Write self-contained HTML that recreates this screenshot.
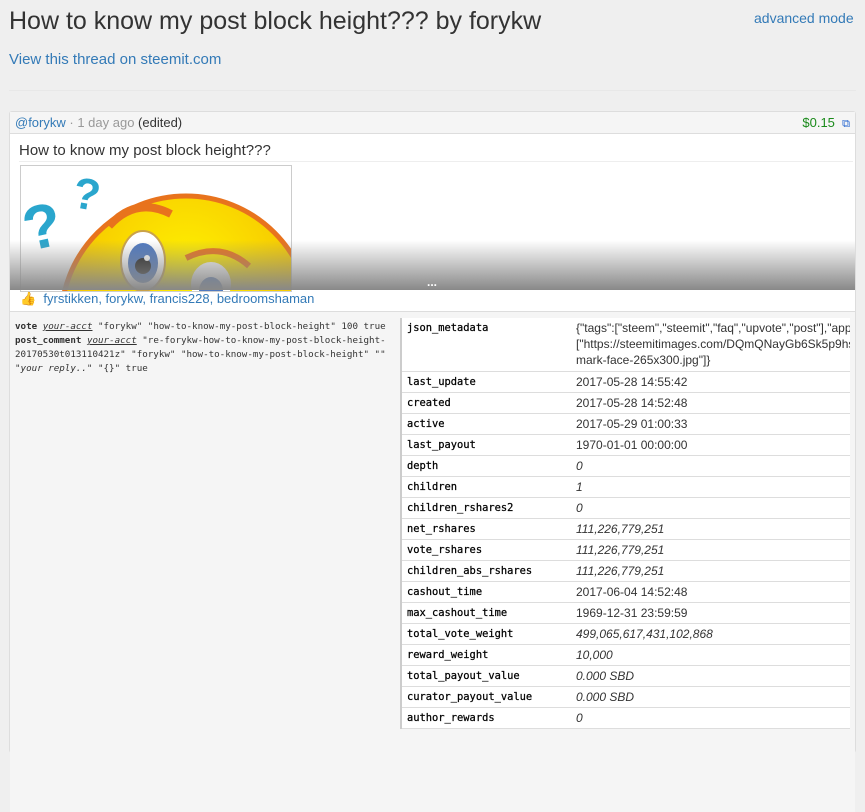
<!DOCTYPE html>
<html><head><meta charset="utf-8"><style>
body{margin:0;background:#efefef;font-family:"Liberation Sans",sans-serif;color:#333;width:865px;height:727px;overflow:hidden;position:relative}
a{color:#337ab7;text-decoration:none}
.abs{position:absolute}
h1{position:absolute;left:9px;top:7px;margin:0;font-size:25px;font-weight:normal;color:#333}
.panel{position:absolute;left:9px;top:111px;width:845px;height:640px;background:#fff;border:1px solid #ddd;border-radius:3px}
.ph{height:21px;background:#f5f5f5;border-bottom:1px solid #ddd;font-size:13px;line-height:21px;padding:0 5px}
.bot{position:absolute;left:0;top:199px;width:845px;height:500px;background:#f5f5f5;border-top:1px solid #ddd}
.cmd{position:absolute;left:5px;top:8px;width:375px;font-family:"DejaVu Sans Mono",monospace;font-size:9.2px;line-height:14px;color:#333}
.cmd u{font-style:italic}
table{position:absolute;left:390px;top:6px;width:450px;border-collapse:collapse;background:#fff;border-left:2px solid #ccc}
td{border-bottom:1px solid #ddd;font-size:12px;padding:0 4px;height:20px;vertical-align:middle;line-height:20px;color:#333}
td.k{font-family:"DejaVu Sans Mono",monospace;font-size:10.4px;width:163px;padding-left:5px;color:#000;-webkit-text-stroke:0.25px #000}
</style></head><body>
<h1>How to know my post block height??? by forykw</h1>
<a class="abs" style="left:754px;top:10px;font-size:14px">advanced mode</a>
<a class="abs" style="left:9px;top:51px;font-size:15px">View this thread on steemit.com</a>
<div class="abs" style="left:9px;top:90px;width:847px;border-top:1px solid #e8e8e8"></div>
<div class="panel">
<div class="ph"><a>@forykw</a> <span style="color:#999">· 1 day ago</span> (edited)
<span style="float:right;color:#1a8a1a">$0.15 &nbsp;<span style="color:#1c5fd0;font-size:11px">⧉</span></span></div>
<div class="abs" style="left:9px;top:30px;font-size:15px;color:#333">How to know my post block height???</div>
<div class="abs" style="left:9px;top:49px;width:834px;border-top:1px solid #eee"></div>
<div class="abs" style="left:10px;top:53px;width:270px;height:125px;border:1px solid #ccc;overflow:hidden;background:#fff">
<svg width="270" height="130" viewBox="0 0 270 130">
<defs><radialGradient id="g" cx="0.5" cy="0.3" r="0.7"><stop offset="0" stop-color="#fff200"/><stop offset="1" stop-color="#f2b200"/></radialGradient></defs>
<circle cx="165" cy="155" r="125" fill="url(#g)" stroke="#e8731d" stroke-width="5"/>
<path d="M88 60 Q115 30 150 48" stroke="#e8731d" stroke-width="8" fill="none"/>
<ellipse cx="122" cy="95" rx="22" ry="30" fill="#fff" stroke="#caa24a" stroke-width="2"/>
<ellipse cx="122" cy="97" rx="15" ry="20" fill="#4f79c0"/>
<circle cx="122" cy="100" r="8" fill="#222"/><circle cx="126" cy="92" r="3" fill="#fff"/>
<ellipse cx="190" cy="118" rx="20" ry="22" fill="#fff"/><ellipse cx="190" cy="125" rx="12" ry="14" fill="#4f79c0"/>
<path d="M165 92 Q200 75 228 100" stroke="#e8731d" stroke-width="6" fill="none"/>
<text x="2" y="82" font-size="62" font-weight="bold" fill="#2aa6cd" font-family="Liberation Sans" transform="rotate(-12 20 60)">?</text>
<text x="52" y="44" font-size="44" font-weight="bold" fill="#2aa6cd" font-family="Liberation Sans" transform="rotate(10 70 30)">?</text>
</svg></div>
<div class="abs" style="left:0;top:128px;width:845px;height:50px;background:linear-gradient(rgba(255,255,255,0),#888)"></div>
<div class="abs" style="left:417px;top:163px;color:#fff;font-size:12px;font-weight:bold">...</div>
<div class="abs" style="left:10px;top:178px;font-size:13px;line-height:18px"><span style="color:#e8a000">👍</span> &nbsp;<a>fyrstikken, forykw, francis228, bedroomshaman</a></div>
<div class="bot">
<div class="cmd"><b>vote</b> <u>your-acct</u> "forykw" "how-to-know-my-post-block-height" 100 true<br><b>post_comment</b> <u>your-acct</u> "re-forykw-how-to-know-my-post-block-height-20170530t013110421z" "forykw" "how-to-know-my-post-block-height" "" <i>"your reply.."</i> "{}" true</div>
<table>
<tr><td class="k" style="height:51px;vertical-align:top">json_metadata</td><td style="height:51px;line-height:16px;padding-top:2px;vertical-align:top;white-space:nowrap;overflow:hidden;max-width:270px">{"tags":["steem","steemit","faq","upvote","post"],"app":"s<br>["https://steemitimages.com/DQmQNayGb6Sk5p9hsA<br>mark-face-265x300.jpg"]}</td></tr>
<tr><td class="k">last_update</td><td>2017-05-28 14:55:42</td></tr>
<tr><td class="k">created</td><td>2017-05-28 14:52:48</td></tr>
<tr><td class="k">active</td><td>2017-05-29 01:00:33</td></tr>
<tr><td class="k">last_payout</td><td>1970-01-01 00:00:00</td></tr>
<tr><td class="k">depth</td><td><i>0</i></td></tr>
<tr><td class="k">children</td><td><i>1</i></td></tr>
<tr><td class="k">children_rshares2</td><td><i>0</i></td></tr>
<tr><td class="k">net_rshares</td><td><i>111,226,779,251</i></td></tr>
<tr><td class="k">vote_rshares</td><td><i>111,226,779,251</i></td></tr>
<tr><td class="k">children_abs_rshares</td><td><i>111,226,779,251</i></td></tr>
<tr><td class="k">cashout_time</td><td>2017-06-04 14:52:48</td></tr>
<tr><td class="k">max_cashout_time</td><td>1969-12-31 23:59:59</td></tr>
<tr><td class="k">total_vote_weight</td><td><i>499,065,617,431,102,868</i></td></tr>
<tr><td class="k">reward_weight</td><td><i>10,000</i></td></tr>
<tr><td class="k">total_payout_value</td><td><i>0.000 SBD</i></td></tr>
<tr><td class="k">curator_payout_value</td><td><i>0.000 SBD</i></td></tr>
<tr><td class="k">author_rewards</td><td><i>0</i></td></tr>
</table>
</div>
</div>
</body></html>
